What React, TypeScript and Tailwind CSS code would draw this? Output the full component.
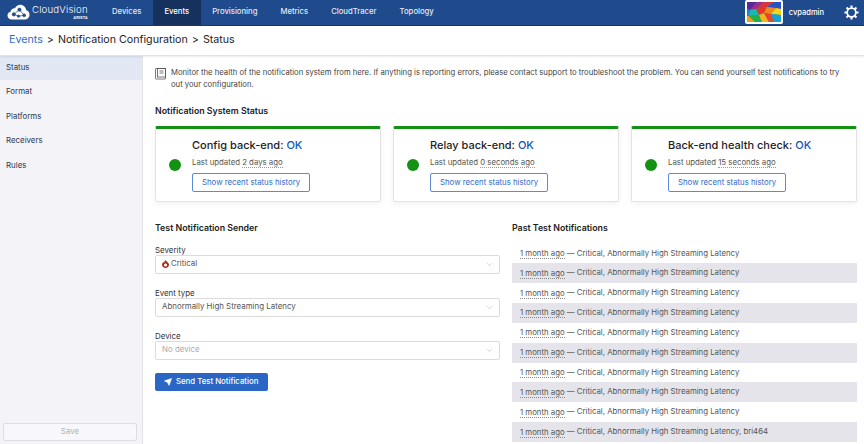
import { ChevronDown, Send } from "lucide-react";

const font = { fontFamily: "Inter, sans-serif" };

const navItems = ["Devices", "Events", "Provisioning", "Metrics", "CloudTracer", "Topology"];
const sideItems = ["Status", "Format", "Platforms", "Receivers", "Rules"];

const cards = [
  { title: "Config back-end:", value: "OK", age: "2 days ago" },
  { title: "Relay back-end:", value: "OK", age: "0 seconds ago" },
  { title: "Back-end health check:", value: "OK", age: "15 seconds ago" },
];

const past = Array.from({ length: 10 }, (_, i) =>
  i === 9 ? "Critical, Abnormally High Streaming Latency, bri464" : "Critical, Abnormally High Streaming Latency"
);

const Logo = () => (
  <svg width="23" height="16" viewBox="0 0 24 17" className="shrink-0">
    <path d="M5 16.5C2 16.5 .3 14.5 .3 12.3c0-2 1.3-3.6 3.2-4C4 5.8 6 4.3 8.2 4.6 9.500 2 11.800.6 14.300.8c3.200.2 5.500 2.600 5.800 5.700 2.200.6 3.600 2.500 3.600 4.800 0 2.900-2.200 5.200-5.200 5.200z" fill="#fff" />
    <g stroke="#1f4a8c" strokeWidth=".8" fill="#1f4a8c">
      <path d="M7 11l6-5 5 6-6 1z" fill="none" />
      <circle cx="7" cy="11" r="1.700" />
      <circle cx="13" cy="6" r="1.700" />
      <circle cx="18" cy="12" r="1.500" />
      <circle cx="12" cy="13" r="1.200" />
    </g>
  </svg>
);

// mosaic thumbnail next to the user name
const Avatar = () => (
  <div className="h-[24px] w-[38px] rounded-[2px] bg-white p-[2px]">
    <svg viewBox="0 0 34 20" className="h-full w-full" preserveAspectRatio="none">
      <rect width="34" height="20" fill="#1fa05a" />
      <polygon points="0,0 10,0 3,8 0,7" fill="#5a2a96" />
      <polygon points="10,0 17,0 9,7 3,8" fill="#a52a8f" />
      <polygon points="17,0 27,0 20,5 9,7" fill="#d8353a" />
      <polygon points="27,0 34,0 34,7 20,5" fill="#2a50c8" />
      <polygon points="0,7 3,8 2,14 0,14" fill="#1f7fd0" />
      <polygon points="3,8 9,7 12,13 2,14" fill="#18b8b0" />
      <polygon points="9,7 20,5 17,11 12,13" fill="#e8352c" />
      <polygon points="20,5 29,6 24,12 17,11" fill="#f08a1f" />
      <polygon points="29,6 34,7 34,13 24,12" fill="#f5d21c" />
      <polygon points="0,14 2,14 8,20 0,20" fill="#f0a020" />
      <polygon points="2,14 12,13 15,20 8,20" fill="#23b04a" />
      <polygon points="12,13 17,11 22,20 15,20" fill="#f5b21c" />
      <polygon points="17,11 24,12 27,20 22,20" fill="#e8452c" />
      <polygon points="24,12 34,13 34,20 27,20" fill="#18a0d8" />
    </svg>
  </div>
);

const Gear = () => (
  <svg width="15" height="15" viewBox="0 0 16 16" className="shrink-0">
    <g stroke="#fff" strokeWidth="2.200" strokeLinecap="butt">
      <path d="M8 .5v3M8 12.500v3M.5 8h3M12.500 8h3M2.700 2.700l2.100 2.100M11.200 11.200l2.100 2.100M2.700 13.300l2.100-2.100M11.200 4.800l2.100-2.100" />
    </g>
    <circle cx="8" cy="8" r="4.600" fill="#1f4a8c" stroke="#fff" strokeWidth="1.800" />
  </svg>
);

const BookIcon = () => (
  <svg width="11" height="12" viewBox="0 0 11 12" className="mt-[1px] shrink-0" fill="none" stroke="#555" strokeWidth=".8">
    <rect x=".5" y=".5" width="10" height="10.500" rx=".5" />
    <rect x="2.500" y=".5" width="8" height="8.500" />
    <path d="M4.500 3h4M4.500 5h4" />
  </svg>
);

const FireIcon = () => (
  <svg width="7" height="8" viewBox="0 0 8 9" className="shrink-0">
    <path d="M4 0c.3 1 1 1.200 1.800 1.800C7.200 2.800 8 4 8 5.300 8 7.400 6.200 9 4 9S0 7.400 0 5.300C0 4 .7 2.900 1.500 2.200c.2.500.5.800.9 1C2.500 2 3 1 4 0z" fill="#b5281c" />
    <circle cx="4" cy="5.600" r="1.800" fill="#fff" />
  </svg>
);

const Field = ({ label, children }: { label: string; children: React.ReactNode }) => (
  <div>
    <div className="text-[7.900px] leading-[10px] text-[#333]">{label}</div>
    <div className="flex h-[19px] items-center justify-between rounded-[2px] border border-[#dcdcdc] bg-white pl-[6px] pr-[5px] text-[7.900px] text-[#555]">
      <div className="flex items-center gap-[2px]">{children}</div>
      <ChevronDown className="h-[9px] w-[9px] text-[#b5b5b5]" strokeWidth={1.5} />
    </div>
  </div>
);

const App = () => {
  return (
    <div className="flex h-[444px] w-[864px] flex-col overflow-hidden bg-white text-[#333]" style={font}>
      {/* top nav */}
      <header className="flex h-[25.500px] shrink-0 items-stretch border-b border-[#16386e] bg-[#1f4a8c] text-white">
        <div className="flex w-[100.500px] items-center gap-[2px] pl-[7px]">
          <Logo />
          <div className="flex flex-col items-end">
            <span className="text-[9.600px] font-light leading-[11px] tracking-[0.2px]">CloudVision</span>
            <span className="text-[4px] font-semibold leading-[5px]">ARISTA</span>
          </div>
        </div>
        <nav className="flex text-[7.700px] font-medium text-[#e4e9f2]">
          {navItems.map((item) => (
            <div key={item} className={item === "Events" ? "flex items-center bg-[#16315e] px-[11.500px] text-white" : "flex items-center px-[11.500px]"}>
              {item}
            </div>
          ))}
        </nav>
        <div className="ml-auto flex items-center pr-[5px]">
          <Avatar />
          <span className="ml-[6px] mr-[20px] text-[7.500px] font-medium">cvpadmin</span>
          <Gear />
        </div>
      </header>

      {/* breadcrumb */}
      <div className="z-10 flex h-[30px] shrink-0 items-center gap-[4px] border-b border-[#e2e2e2] pl-[9px] text-[10.700px] text-[#1d1d1f] shadow-[0_1px_2px_rgba(0,0,0,0.08)]">
        <span className="text-[#2f6bc9]">Events</span>
        <span>&gt;</span>
        <span>Notification Configuration</span>
        <span>&gt;</span>
        <span>Status</span>
      </div>

      <div className="flex min-h-0 flex-1">
        {/* sidebar */}
        <aside className="flex w-[143px] shrink-0 flex-col border-r border-[#e3e3e6] bg-[#f3f3f8] text-[7.900px] text-[#2c3a52]">
          {sideItems.map((item) => (
            <div key={item} className={item === "Status" ? "flex h-[24.500px] items-center bg-[#e1e7f3] pl-[6px]" : "flex h-[24.500px] items-center pl-[6px]"}>
              {item}
            </div>
          ))}
          <div className="mt-auto pb-[3px] pl-[3px] pr-[5px]">
            <div className="flex h-[18px] items-center justify-center rounded-[2px] border border-[#dedee2] bg-[#f8f8fc] text-[7.900px] text-[#b0b0b4]">Save</div>
          </div>
        </aside>

        {/* content */}
        <main className="min-w-0 flex-1 pl-[12px] pr-[7px] pt-[11px]">
          <div className="flex gap-[5px] pr-[7px] text-[7.700px] leading-[12px] text-[#444]">
            <BookIcon />
            <p>
              Monitor the health of the notification system from here. If anything is reporting errors, please contact support to troubleshoot the problem. You can send yourself test notifications to try out your configuration.
            </p>
          </div>

          <h2 className="mt-[14px] text-[8.800px] font-semibold leading-[12px] text-[#222]">Notification System Status</h2>

          <div className="mt-[9px] grid grid-cols-3 gap-[12px]">
            {cards.map((c) => (
              <div key={c.title} className="flex h-[76px] items-center rounded-[2px] border border-[#e3e3e3] border-t-[3px] border-t-[#129112] bg-white pl-[13px] shadow-[0_2px_6px_rgba(0,0,0,0.06)]">
                <div className="mt-[1px] h-[12px] w-[12px] shrink-0 rounded-full bg-[#129112]" />
                <div className="ml-[11px] flex flex-col items-start">
                  <div className="text-[11px] font-medium leading-[16px] text-[#1d1d1f]">
                    {c.title} <span className="text-[#0f56b8]">{c.value}</span>
                  </div>
                  <div className="mt-[4px] text-[7.800px] leading-[11px] text-[#555]">
                    Last updated <span className="border-b border-dotted border-[#999]">{c.age}</span>
                  </div>
                  <div className="mt-[5px] flex h-[19px] items-center rounded-[2px] border border-[#5b8ad6] px-[9px] text-[7.800px] text-[#2f6bc9]">Show recent status history</div>
                </div>
              </div>
            ))}
          </div>

          <div className="mt-[20px] grid grid-cols-2 gap-[12px]">
            <section>
              <h2 className="text-[8.800px] font-semibold leading-[12px] text-[#222]">Test Notification Sender</h2>
              <div className="mt-[11px] flex flex-col gap-[14px]">
                <Field label="Severity">
                  <FireIcon />
                  <span>Critical</span>
                </Field>
                <Field label="Event type">
                  <span>Abnormally High Streaming Latency</span>
                </Field>
                <Field label="Device">
                  <span className="text-[#aaa]">No device</span>
                </Field>
              </div>
              <button className="mt-[13px] flex h-[18px] w-[113px] items-center gap-[4px] rounded-[2px] bg-[#2c66c4] pl-[9px] text-[7.800px] font-medium text-white">
                <Send className="h-[8px] w-[8px]" fill="#fff" />
                Send Test Notification
              </button>
            </section>

            <section>
              <h2 className="text-[8.800px] font-semibold leading-[12px] text-[#222]">Past Test Notifications</h2>
              <ul className="mt-[10px]">
                {past.map((text, i) => (
                  <li key={i} className={i % 2 === 1 ? "flex h-[19.850px] items-center bg-[#e4e4ea] pl-[8px] text-[7.800px] text-[#555]" : "flex h-[19.850px] items-center pl-[8px] text-[7.800px] text-[#555]"}>
                    <span className="border-b border-dotted border-[#888] leading-[10px]">1 month ago</span>
                    <span>&nbsp;— {text}</span>
                  </li>
                ))}
              </ul>
            </section>
          </div>
        </main>
      </div>
    </div>
  );
};

export default App;
